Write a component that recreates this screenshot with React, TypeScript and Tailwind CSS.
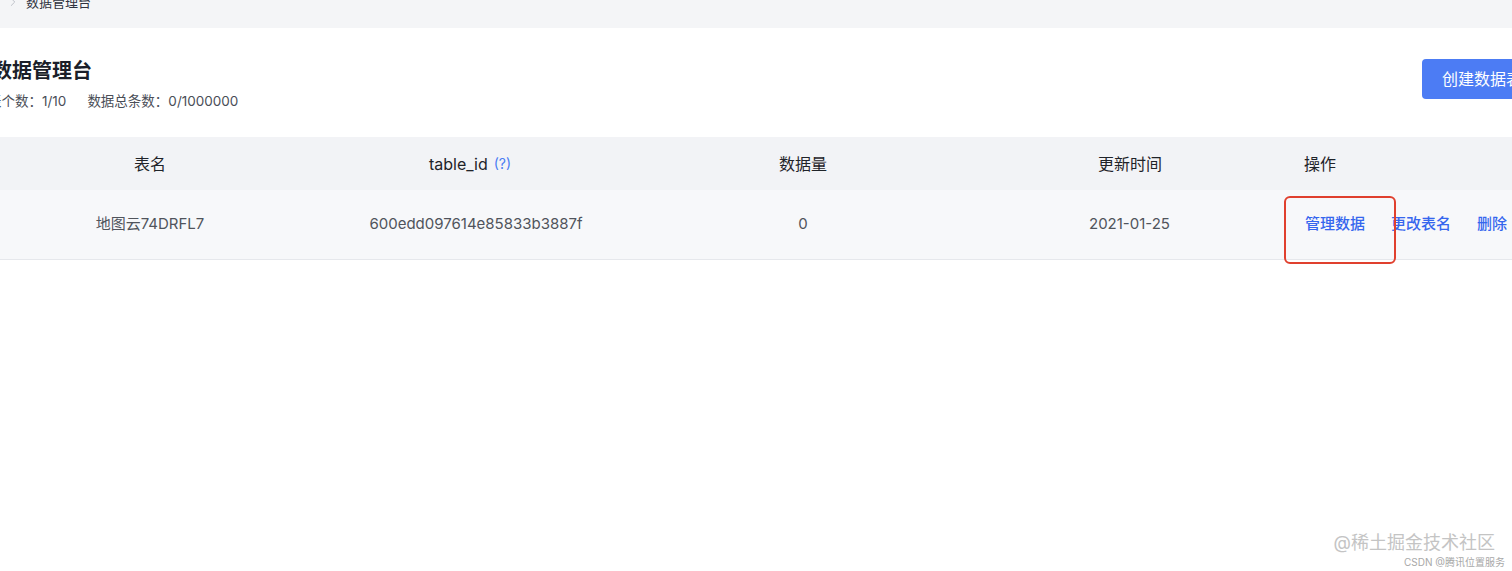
import { ChevronRight } from "lucide-react";

const font = { fontFamily: '"Inter", "Noto Sans CJK SC", sans-serif' };

function Cell({ w, children, className = "" }: { w: string; children: React.ReactNode; className?: string }) {
  return <div className={`${w} shrink-0 flex items-center justify-center ${className}`}>{children}</div>;
}

export default function App() {
  return (
    <div className="relative h-[571px] w-[1512px] overflow-hidden bg-white" style={font}>
      {/* breadcrumb strip */}
      <div className="flex h-[28px] flex-col bg-[#f4f5f7]">
        <div className="-mt-[8px] flex items-center gap-[6px] pl-[6px] text-[13px] leading-[20px] text-[#2f3340]">
          <ChevronRight className="h-[14px] w-[14px] text-[#b8bcc4]" strokeWidth={1.5} />
          <span>数据管理台</span>
        </div>
      </div>

      {/* heading */}
      <div className="flex items-start justify-between pt-[31px]">
        <div className="-ml-[8px]">
          <h1 className="text-[20px] font-bold leading-[24px] text-[#1b1f2a]">数据管理台</h1>
          <div className="-ml-[4px] mt-[9px] flex gap-[21px] text-[13.5px] leading-[18px] text-[#4a4e57]">
            <span>表个数：1/10</span>
            <span>数据总条数：0/1000000</span>
          </div>
        </div>
        <button className="-mr-[30px] h-[40px] rounded-[4px] bg-[#4c7cf4] px-[20px] text-[16px] text-white">
          创建数据表
        </button>
      </div>

      {/* table */}
      <div className="mt-[27px]">
        <div className="flex h-[53px] bg-[#f2f3f6] text-[16px] text-[#1f2329]">
          <Cell w="w-[300px]">表名</Cell>
          <Cell w="w-[340px]">
            table_id<span className="ml-[6px] text-[14px] text-[#4a7cf3]">(?)</span>
          </Cell>
          <Cell w="w-[326px]">数据量</Cell>
          <Cell w="w-[328px]">更新时间</Cell>
          <div className="flex items-center pl-[10px]">操作</div>
        </div>
        <div className="flex h-[70px] border-b border-[#e6e8ec] bg-[#f7f8fa] text-[15px] text-[#50545c]">
          <Cell w="w-[300px]">地图云74DRFL7</Cell>
          <Cell w="w-[352px]">600edd097614e85833b3887f</Cell>
          <Cell w="w-[302px]">0</Cell>
          <Cell w="w-[351px]">2021-01-25</Cell>
          <div className="flex items-center gap-[26px] font-medium text-[#3566ee]">
            <span>管理数据</span>
            <span>更改表名</span>
            <span>删除</span>
          </div>
        </div>
      </div>

      {/* annotation box */}
      <div className="absolute left-[1284px] top-[196px] h-[68px] w-[112px] rounded-[6px] border-2 border-[#e0402e]" />

      {/* watermark */}
      <div className="absolute right-[17px] top-[531px] text-[18px] leading-[24px] text-[#c4c4c4]">@稀土掘金技术社区</div>
      <div className="absolute right-[7px] top-[556px] text-[10px] leading-[13px] text-[#a8a8a8]">CSDN @腾讯位置服务</div>
    </div>
  );
}
